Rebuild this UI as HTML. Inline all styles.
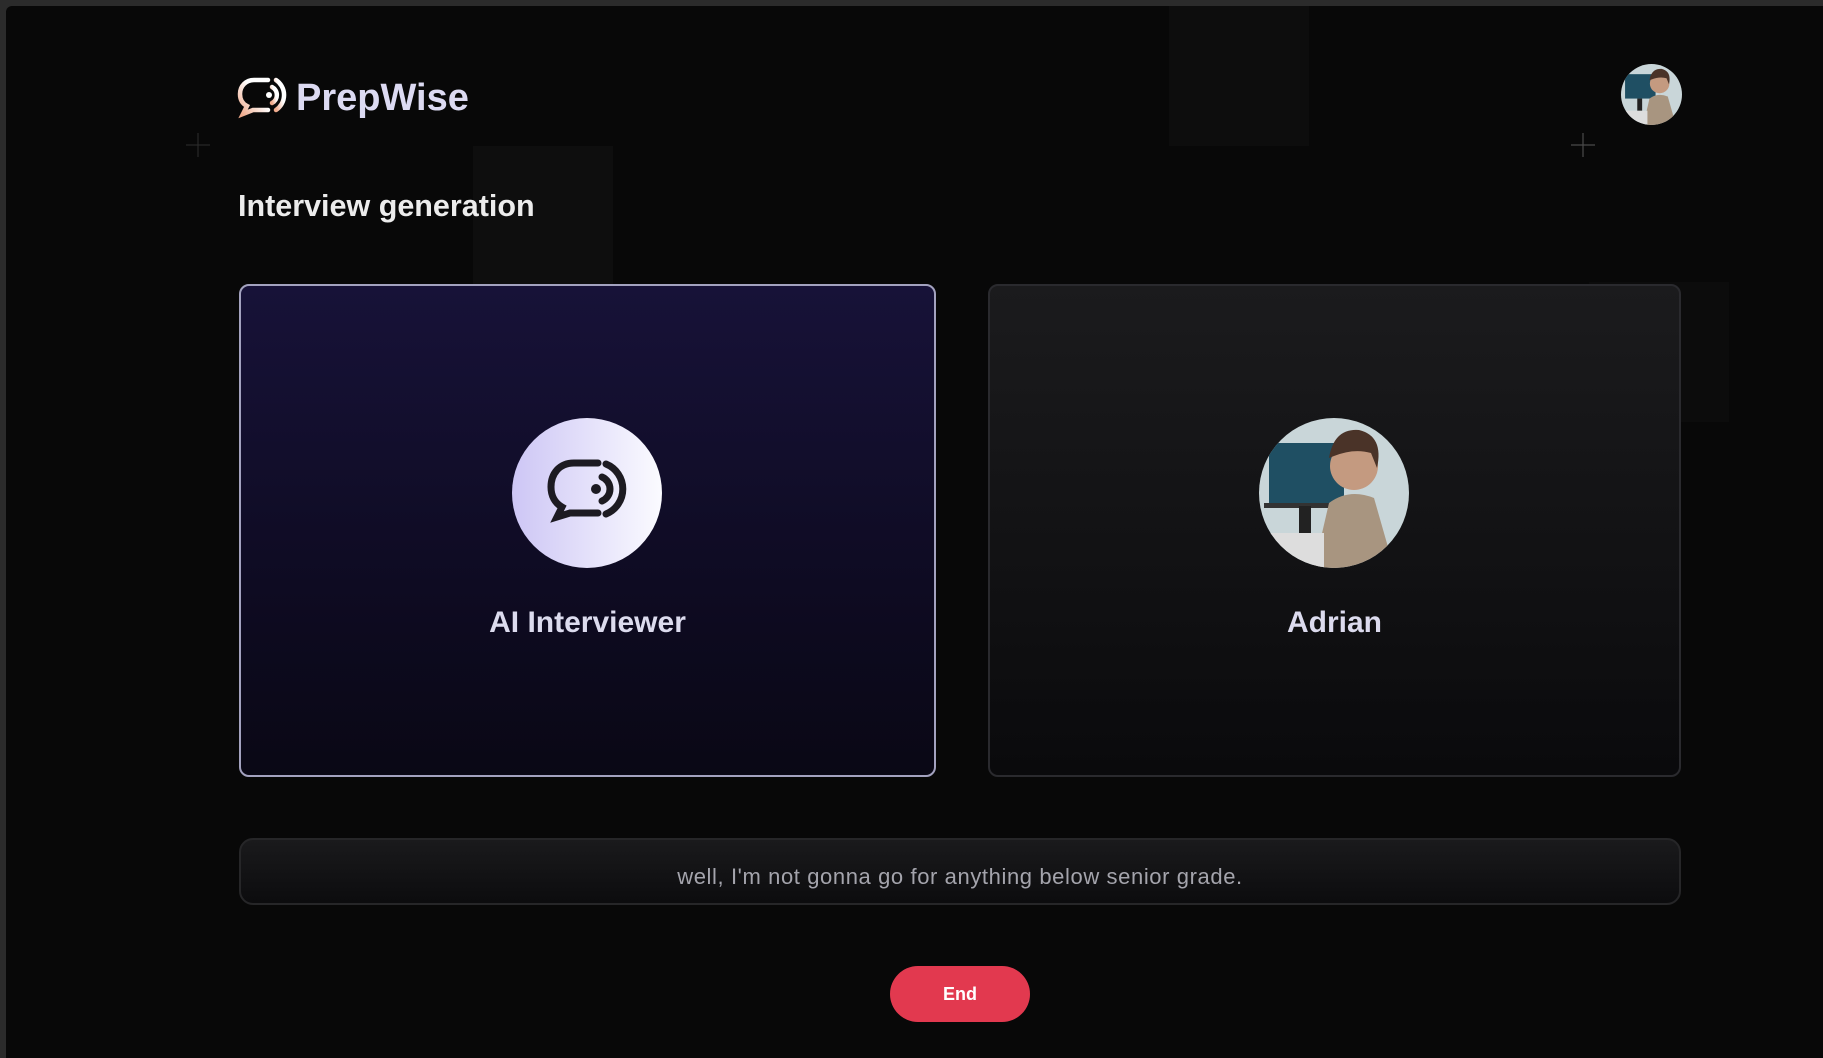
<!DOCTYPE html>
<html><head><meta charset="utf-8"><style>
*{margin:0;padding:0;box-sizing:border-box}
html,body{width:1823px;height:1058px;overflow:hidden;background:#2b2b2b;font-family:"Liberation Sans",sans-serif}
.main{position:absolute;left:6px;top:6px;right:0;bottom:0;background:#080808;border-top-left-radius:6px;overflow:hidden}
.abs{position:absolute}
.tile{position:absolute;background:#0e0e0e}
.card{position:absolute;top:284px;height:493px;border-radius:10px;text-align:center}
.name{position:absolute;left:0;right:0;font-size:30px;font-weight:bold;color:#dcdbee}
</style></head><body>
<div class="main">
  <div class="tile" style="left:467px;top:140px;width:140px;height:140px"></div>
  <div class="tile" style="left:1163px;top:0;width:140px;height:140px;background:#0d0d0d"></div>
  <div class="tile" style="left:1583px;top:276px;width:140px;height:140px;background:#0c0c0c"></div>
</div>
<svg class="abs" style="left:186px;top:133px" width="24" height="24"><path d="M12 0V24M0 12H24" stroke="#2e2e2e" stroke-width="1"/></svg>
<svg class="abs" style="left:1571px;top:133px" width="24" height="24"><path d="M12 0V24M0 12H24" stroke="#4a4a4a" stroke-width="1.2"/></svg>

<svg class="abs" style="left:236px;top:76px" width="52" height="44" viewBox="0 0 52 44">
<defs><linearGradient id="lg" x1="0" y1="1" x2="1" y2="0"><stop offset="0" stop-color="#f0a98a"/><stop offset="0.6" stop-color="#fff"/></linearGradient></defs>
<g fill="none" stroke="url(#lg)" stroke-width="4.5" stroke-linecap="round">
<path d="M32 4H18C10 4 4 10 4 18C4 24 7 28 11 30L7 38L17 34H32"/>
<path d="M36 11A9 9 0 0 1 36 27"/>
<path d="M40 4A18 18 0 0 1 40 34"/></g>
<circle cx="33" cy="19" r="3" fill="#fff"/>
</svg>
<div class="abs" style="left:296px;top:77px;font-size:38px;font-weight:bold;color:#dcdaf2">PrepWise</div>

<svg class="abs" style="left:1621px;top:64px" width="61" height="61" viewBox="0 0 150 150">
<defs><clipPath id="c1"><circle cx="75" cy="75" r="75"/></clipPath></defs>
<g clip-path="url(#c1)"><rect width="150" height="150" fill="#c9d6d9"/><rect x="10" y="25" width="75" height="60" fill="#1f4f63"/><rect x="40" y="85" width="12" height="30" fill="#222"/><path d="M55 150L70 85Q90 70 115 80L135 150Z" fill="#a89580"/><circle cx="95" cy="48" r="24" fill="#c49a80"/><path d="M70 40Q75 10 100 12Q125 18 118 50L112 35Q95 30 75 38Z" fill="#4a3328"/><rect x="5" y="115" width="60" height="35" fill="#ddd"/></g>
</svg>

<div class="abs" style="left:238px;top:189px;font-size:30.5px;font-weight:bold;color:#ececec">Interview generation</div>

<div class="card" style="left:239px;width:697px;border:2px solid #a3a2bf;background:linear-gradient(180deg,#171238 0%,#0d0a1f 70%,#0a0815 100%)">
</div>
<svg class="abs" style="left:512px;top:418px" width="150" height="150" viewBox="0 0 150 150">
<defs><linearGradient id="cg" x1="0" x2="1"><stop offset="0" stop-color="#cdc6f5"/><stop offset="1" stop-color="#fbfbff"/></linearGradient></defs>
<circle cx="75" cy="75" r="75" fill="url(#cg)"/>
<g fill="none" stroke="#1d1b22" stroke-width="7" stroke-linecap="round">
<path d="M86 45H62C47 45 39 56 39 69C39 78 43 85 50 89L45 99L58 95H86"/>
<path d="M90 59A13 13 0 0 1 90 83"/>
<path d="M94 46A27 27 0 0 1 94 96"/></g>
<circle cx="84" cy="71" r="5" fill="#1d1b22"/>
</svg>
<div class="card" style="left:239px;width:697px;background:none"><div class="name" style="top:322px">AI Interviewer</div></div>

<div class="card" style="left:988px;width:693px;border:2px solid #2a2a2e;background:linear-gradient(180deg,#1b1b1d 0%,#111113 60%,#0a0a0c 100%)">
<div class="name" style="top:320px">Adrian</div></div>
<svg class="abs" style="left:1259px;top:418px" width="150" height="150" viewBox="0 0 150 150">
<defs><clipPath id="c2"><circle cx="75" cy="75" r="75"/></clipPath></defs>
<g clip-path="url(#c2)"><rect width="150" height="150" fill="#c9d6d9"/><rect x="10" y="25" width="75" height="60" fill="#1f4f63"/><rect x="5" y="85" width="80" height="5" fill="#333"/><rect x="40" y="88" width="12" height="30" fill="#222"/><path d="M55 150L70 85Q90 70 115 80L135 150Z" fill="#a89580"/><circle cx="95" cy="48" r="24" fill="#c49a80"/><path d="M70 40Q75 10 100 12Q125 18 118 50L112 35Q95 30 75 38Z" fill="#4a3328"/><rect x="5" y="115" width="60" height="35" fill="#ddd"/></g>
</svg>

<div class="abs" style="left:239px;top:838px;width:1442px;height:67px;border-radius:14px;border:2px solid #262628;background:linear-gradient(180deg,#1a1a1c,#0c0c0e);text-align:center;line-height:73px;font-size:22px;letter-spacing:0.6px;color:#a4a4ac">well, I'm not gonna go for anything below senior grade.</div>

<div class="abs" style="left:890px;top:966px;width:140px;height:56px;border-radius:28px;background:#e2394f;color:#fff;font-weight:bold;font-size:18px;text-align:center;line-height:56px">End</div>
</body></html>
